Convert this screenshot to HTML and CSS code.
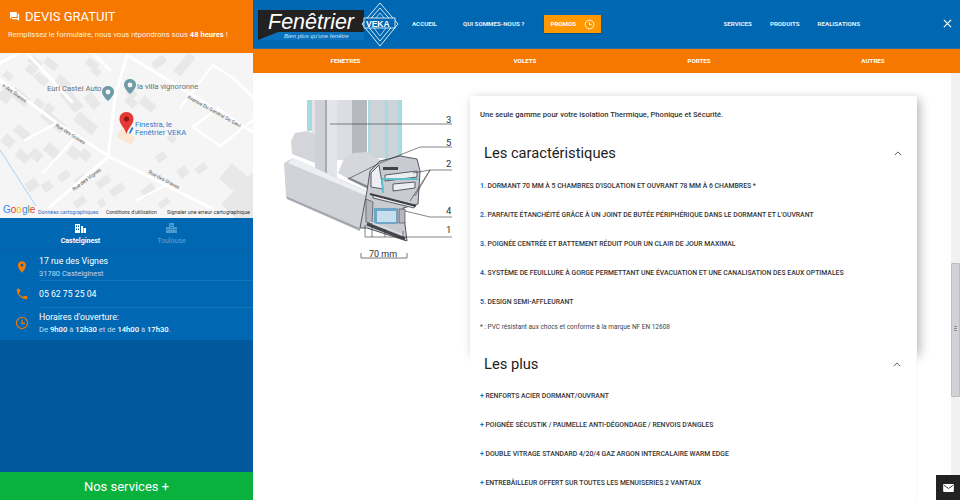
FILE: index.html
```html
<!DOCTYPE html>
<html lang="fr">
<head>
<meta charset="utf-8">
<title>Fenêtrier VEKA</title>
<link rel="stylesheet" href="styles.css">
</head>
<body>
<div class="page">
  <aside class="side">
    <div class="quote">
      <h2 class="quote-title">
        <svg class="quote-icon" viewBox="0 0 24 24"><path d="M21 6h-2v9H6v2c0 .55.45 1 1 1h11l4 4V7c0-.55-.45-1-1-1zm-4 6V3c0-.55-.45-1-1-1H3c-.55 0-1 .45-1 1v14l4-4h10c.55 0 1-.45 1-1z"/></svg>
        DEVIS GRATUIT
      </h2>
      <p class="quote-sub">Remplissez le formulaire, nous vous répondrons sous <b>48 heures</b> !</p>
    </div>
    <svg class="map" viewBox="0 53 253 165" width="253" height="165">
      <rect x="0" y="53" width="253" height="165" fill="#f5f5f5"/>
      <g fill="#e8e8e8">
        <rect x="28" y="58" width="14" height="8" transform="rotate(40 35 62)"/>
        <rect x="44" y="60" width="14" height="8" transform="rotate(40 51 64)"/>
        <rect x="26" y="66" width="10" height="8" transform="rotate(40 31 70)"/>
        <rect x="4" y="72" width="9" height="7" transform="rotate(40 8 75)"/>
        <rect x="0" y="88" width="12" height="14" transform="rotate(40 6 95)"/>
        <rect x="10" y="92" width="20" height="10" transform="rotate(40 20 97)"/>
        <rect x="34" y="75" width="14" height="8" transform="rotate(40 41 79)"/>
        <rect x="56" y="78" width="14" height="9" transform="rotate(40 63 82)"/>
        <rect x="86" y="60" width="12" height="8" transform="rotate(40 92 64)"/>
        <rect x="92" y="68" width="9" height="7" transform="rotate(40 96 71)"/>
        <rect x="34" y="100" width="10" height="9" transform="rotate(40 39 104)"/>
        <rect x="45" y="104" width="9" height="9" transform="rotate(40 49 108)"/>
        <rect x="60" y="95" width="24" height="11" transform="rotate(50 72 100)"/>
        <rect x="84" y="96" width="16" height="10" transform="rotate(50 92 101)"/>
        <rect x="40" y="116" width="26" height="10" transform="rotate(40 53 121)"/>
        <rect x="74" y="118" width="24" height="11" transform="rotate(40 86 123)"/>
        <rect x="2" y="136" width="12" height="10" transform="rotate(40 8 141)"/>
        <rect x="14" y="128" width="16" height="9" transform="rotate(40 22 132)"/>
        <rect x="16" y="152" width="14" height="9" transform="rotate(40 23 156)"/>
        <rect x="30" y="150" width="12" height="10" transform="rotate(40 36 155)"/>
        <rect x="44" y="146" width="16" height="10" transform="rotate(40 52 151)"/>
        <rect x="68" y="148" width="12" height="10" transform="rotate(40 74 153)"/>
        <rect x="80" y="150" width="10" height="10" transform="rotate(40 85 155)"/>
        <rect x="26" y="180" width="12" height="10" transform="rotate(-35 32 185)"/>
        <rect x="42" y="182" width="10" height="9" transform="rotate(-35 47 186)"/>
        <rect x="58" y="172" width="12" height="8" transform="rotate(-35 64 176)"/>
        <rect x="75" y="176" width="12" height="8" transform="rotate(-35 81 180)"/>
        <rect x="96" y="178" width="15" height="8" transform="rotate(-35 103 182)"/>
        <rect x="110" y="186" width="15" height="8" transform="rotate(-35 117 190)"/>
        <rect x="74" y="198" width="12" height="8" transform="rotate(-35 80 202)"/>
        <rect x="98" y="200" width="7" height="7" transform="rotate(-35 101 203)"/>
        <rect x="141" y="186" width="14" height="9" transform="rotate(-35 148 190)"/>
        <rect x="158" y="200" width="12" height="6" transform="rotate(-35 164 203)"/>
        <rect x="156" y="153" width="10" height="8" transform="rotate(-35 161 157)"/>
        <rect x="178" y="167" width="10" height="10" transform="rotate(-35 183 172)"/>
        <rect x="195" y="165" width="12" height="7" transform="rotate(-35 201 168)"/>
        <rect x="222" y="170" width="28" height="20" transform="rotate(40 236 180)"/>
        <path d="M253 172v46h-18l-14-14z"/>
        <rect x="140" y="100" width="16" height="9" transform="rotate(40 148 104)"/>
        <rect x="125" y="98" width="12" height="8" transform="rotate(40 131 102)"/>
        <rect x="168" y="135" width="8" height="7" transform="rotate(40 172 138)"/>
        <rect x="172" y="60" width="24" height="9" transform="rotate(-50 184 64)"/>
        <rect x="152" y="58" width="14" height="8" transform="rotate(-35 159 62)"/>
        <rect x="127" y="90" width="10" height="7" transform="rotate(40 132 93)"/>
      </g>
      <g fill="none" stroke="#fff" stroke-linecap="round" stroke-linejoin="round">
        <path d="M0 80 L57 123 L110 157 L213 209" stroke-width="3"/>
        <path d="M127 55 L115 97 L108 157 L50 207" stroke-width="3"/>
        <path d="M127 55 L253 132" stroke-width="3"/>
        <path d="M0 63 L20 53 M27 53 L72 102 M93 53 L110 70" stroke-width="3"/>
        <path d="M43 173 L73 140 M25 140 L57 123 M137 200 L170 183" stroke-width="2.500"/>
        <path d="M180 108 L213 65 L233 78 L253 97 M193 127 L220 146 L253 120 M193 127 L218 108 L240 125" stroke-width="2.500"/>
      </g>
      <path d="M0 150 L36 206" stroke="#a6d4f5" stroke-width="1"/>
      <path d="M122 129 L135 138 L131 144 L117 136z" fill="#fbe8d2" stroke="#f6d9b4" stroke-width=".5"/>
      <path d="M108 86c-3.500 0-6 2.500-6 6 0 4 6 9 6 9s6-5 6-9c0-3.500-2.500-6-6-6z" fill="#6f9ba8"/>
      <circle cx="108" cy="92" r="2.400" fill="#f5f5f5"/>
      <path d="M130 79c-3.500 0-6 2.500-6 6 0 4 6 9 6 9s6-5 6-9c0-3.500-2.500-6-6-6z" fill="#6f9ba8"/>
      <circle cx="130" cy="85" r="2.400" fill="#f5f5f5"/>
      <path d="M126.500 112c-4.200 0-7 3.100-7 7 0 5.500 5.200 8.500 7 15 1.800-6.500 7-9.500 7-15 0-3.900-2.800-7-7-7z" fill="#e53935"/>
      <circle cx="126.500" cy="119" r="2.500" fill="#8a1a14"/>
      <path d="M129 133c1-2 1.500-4 3-6l1.500 1c-1 2-2 4-3.500 6z" fill="#2f7fd9"/>
      <g font-family="Roboto, sans-serif" font-size="7.700" fill="#5f7177">
        <text x="47" y="91">Eurl Castel Auto</text>
        <text x="137" y="89">la villa vignoronne</text>
      </g>
      <g font-family="Roboto, sans-serif" font-size="7.700" fill="#2f79c9">
        <text x="135" y="127">Finestra, le</text>
        <text x="135" y="135">Fenêtrier VEKA</text>
      </g>
      <g font-family="Roboto, sans-serif" font-size="5" fill="#555">
        <text x="2" y="86" transform="rotate(36 2 86)">e des Graves</text>
        <text x="55" y="126" transform="rotate(33 55 126)">Rue des Graves</text>
        <text x="148" y="173" transform="rotate(28 148 173)">Rue des Graves</text>
        <text x="74" y="191" transform="rotate(-37 74 191)">Rue des Vignes</text>
        <text x="187" y="98" transform="rotate(29 187 98)">Avenue Du Général De Gaul</text>
      </g>
      <text x="3" y="213" class="g-logo"><tspan fill="#4285f4">G</tspan><tspan fill="#ea4335">o</tspan><tspan fill="#fbbc05">o</tspan><tspan fill="#4285f4">g</tspan><tspan fill="#34a853">l</tspan><tspan fill="#ea4335">e</tspan></text>
      <g font-family="Roboto, sans-serif" font-size="5" fill="#333">
        <text x="38" y="214" font-size="5.300" fill="#3a6fc4">Données cartographiques</text>
        <text x="106" y="214">Conditions d'utilisation</text>
        <text x="167" y="214" font-size="5.400">Signaler une erreur cartographique</text>
      </g>
    </svg>
    <nav class="tabs">
      <div class="tab tab-on">
        <svg class="tab-icon" viewBox="0 0 11 10"><path d="M0 1h5v9H0zM6 3h2v7H6zM8.500 5H11v5H8.500z"/><path d="M1 2.500h1v1.500H1zM3 2.500h1v1.500H3zM1 5.500h1V7H1zM3 5.500h1V7H3z" fill="#0068b3"/></svg>
        <span>Castelginest</span>
      </div>
      <div class="tab tab-off">
        <svg class="tab-icon" viewBox="0 0 11 10"><path d="M0 4h3v6H0zM3 0h5v10H3zM8 4h3v6H8z"/><path d="M4 2h3v.6H4zM4 4h3v.6H4zM4 6h3v.6H4zM0 6h3v.6H0zM8 6h3v.6H8z" fill="#0068b3"/></svg>
        <span>Toulouse</span>
      </div>
    </nav>
    <div class="infos">
      <div class="info info-addr">
        <svg class="info-icon" viewBox="0 0 24 24"><path d="M12 2C8.100 2 5 5.100 5 9c0 5.200 7 13 7 13s7-7.800 7-13c0-3.900-3.100-7-7-7zm0 9.500a2.500 2.500 0 1 1 0-5 2.500 2.500 0 0 1 0 5z"/></svg>
        <div class="info-body"><div class="info-main">17 rue des Vignes</div><div class="info-sub">31780 Castelginest</div></div>
      </div>
      <div class="info info-tel">
        <svg class="info-icon" viewBox="0 0 24 24"><path d="M6.600 10.800c1.400 2.800 3.800 5.100 6.600 6.600l2.200-2.200c.3-.3.700-.4 1-.2 1.100.4 2.300.6 3.600.6.600 0 1 .4 1 1V20c0 .6-.4 1-1 1C10.600 21 3 13.400 3 4c0-.6.400-1 1-1h3.500c.6 0 1 .4 1 1 0 1.300.2 2.500.6 3.600.1.300 0 .7-.2 1z"/></svg>
        <div class="info-body"><div class="info-main">05 62 75 25 04</div></div>
      </div>
      <div class="info info-time">
        <svg class="info-icon info-clock" viewBox="0 0 24 24"><circle cx="12" cy="12" r="9.500"/><path d="M12 6.500V12.500H17"/></svg>
        <div class="info-body"><div class="info-main">Horaires d'ouverture:</div><div class="info-hours">De <b>9h00</b> à <b>12h30</b> et de <b>14h00</b> à <b>17h30</b>.</div></div>
      </div>
    </div>
    <div class="side-fill"></div>
    <button class="services">Nos services +</button>
  </aside>
  <div class="main">
    <header class="top">
      <div class="logo">
        <svg class="logo-svg" viewBox="0 0 142 48" width="142" height="48">
          <path d="M0 30L18 30H106V40H0z" fill="#0a71bd"/>
          <path d="M0 10H106V32H20L0 40z" fill="#222"/>
          <path d="M122 3 L140 24 L122 46 L104 24z" fill="#0068b3" stroke="#d8e8f5" stroke-width="1"/>
          <path d="M122 8 L136 24 L122 41 L108 24z" fill="none" stroke="#d8e8f5" stroke-width="1"/>
          <path d="M122 13 L131 24 L122 36 L113 24z" fill="none" stroke="#d8e8f5" stroke-width=".8"/>
          <rect x="106" y="18" width="31" height="10" fill="#0068b3" stroke="#fff" stroke-width=".8"/>
          <text x="10" y="29" class="logo-name">Fenêtrier</text>
          <text x="108" y="26.500" class="logo-veka">VEKA</text>
          <text x="26" y="38" class="logo-tag">Bien plus qu'une fenêtre</text>
        </svg>
      </div>
      <nav class="nav nav-left">
        <a>ACCUEIL</a>
        <a>QUI SOMMES-NOUS ?</a>
        <span class="promo">PROMOS
          <svg class="promo-icon" viewBox="0 0 24 24"><circle cx="12" cy="12" r="9.500"/><path d="M12 6.500V12.500H17"/></svg>
        </span>
      </nav>
      <nav class="nav nav-right">
        <a>SERVICES</a>
        <a>PRODUITS</a>
        <a>REALISATIONS</a>
      </nav>
      <svg class="close" viewBox="0 0 10 10"><path d="M1 1L9 9M9 1L1 9"/></svg>
    </header>
    <nav class="cats">
      <a>FENETRES</a><a>VOLETS</a><a>PORTES</a><a>AUTRES</a>
    </nav>
    <div class="content">
      <div class="scroll-area">
        <figure class="figure">
          <svg viewBox="0 0 200 180" width="200" height="180">
            <path d="M37 9h5v31h-5zM128 9h4v62h-4zM98 9h2v62h-2zM115 9h3v62h-3z" fill="#a8dbe0"/>
            <path d="M42 9h3v34h-3z" fill="#e3e5e9"/>
            <path d="M45 9h10v72H45z" fill="#cfd1d8"/>
            <path d="M55 9h2v74h-2z" fill="#a9acb5"/>
            <path d="M57 9h10v78H57z" fill="#e4e5ea"/>
            <path d="M67 9h15v60H67z" fill="#dcdde2"/>
            <path d="M82 9h15v55H82z" fill="#b7b9c1"/>
            <path d="M100 9h15v58h-15zM118 9h10v58h-10z" fill="#ccd4d9"/>
            <path d="M21 50L25 42 37 40 45 43V72L22 63z" fill="#d3d5db"/>
            <path d="M68 82L74 68 84 62 97 61 112 70 100 100z" fill="#d6d7dd"/>
            <path d="M14 72L23 67 97 100 90 137 16 105z" fill="#d2d3da"/>
            <path d="M23 67L100 102 97 105 18 72z" fill="#eeeff2"/>
            <path d="M78 87L100 97" stroke="#83858c" stroke-width="2"/>
            <path d="M16 105L90 137V140L17 108z" fill="#a6a8b0"/>
            <path d="M97 100L100 80 110 70 130 65 147 68 150 80 148 113 133 117 137 150 97 137 90 137z" fill="#c9cbd2" stroke="#55585f" stroke-width="1"/>
            <path d="M101 82l8-8 4 24-12-2zM115 84l32-4v6l-32 4zM123 93l22-2v6l-22 3zM103 104l42 10-1 3-41-10z" fill="#eceef1" stroke="#4c4e54" stroke-width=".9"/>
            <path d="M112 88h36" stroke="#5fbecb" stroke-width="1.800"/>
            <path d="M112 88l1 14" stroke="#5fbecb" stroke-width="1.800"/>
            <path d="M113 76h15v3h-15z" fill="#3f4248"/>
            <path d="M100 103l46 12" stroke="#3d3f45" stroke-width="2.200"/>
            <path d="M96 108l7 3 -1 22-6-2z" fill="#b5b7bf" stroke="#4c4e54" stroke-width=".7"/>
            <rect x="104" y="117" width="24" height="16" fill="#6fa6c6"/>
            <rect x="107" y="120" width="19" height="11" fill="#c7dfec"/>
            <path d="M129 118h6v14h-6z" fill="#b5b7bf" stroke="#4c4e54" stroke-width=".7"/>
            <path d="M97 133L135 148" stroke="#44464c" stroke-width="3"/>
            <path d="M100 131L134 144" stroke="#e8e9ed" stroke-width="1"/>
            <g stroke="#333" stroke-width=".6" fill="none">
              <path d="M60 33H182M80 87L110 72 150 56H182M143 82L160 79H182M160 79L145 105M160 79L140 110M135 120L160 126H182M95 146H182M95 134V146M102 136V146M115 138V146M133 140V146"/>
            </g>
            <g class="fig-num">
              <text x="176" y="32">3</text>
              <text x="176" y="55">5</text>
              <text x="176" y="76">2</text>
              <text x="176" y="123">4</text>
              <text x="176" y="142">1</text>
            </g>
            <path d="M91 162v5H137v-5" stroke="#555" fill="none" stroke-width=".8"/>
            <text x="99" y="166" class="fig-mm">70 mm</text>
          </svg>
        </figure>
        <article class="card">
          <section class="card-raised">
            <p class="lead">Une seule gamme pour votre isolation Thermique, Phonique et Sécurité.</p>
            <div class="sec-head"><h3>Les caractéristiques</h3><svg class="chev" viewBox="0 0 10 6"><path d="M1 5l4-4 4 4"/></svg></div>
            <ul class="list">
              <li><em>1.</em> DORMANT 70 MM À 5 CHAMBRES D'ISOLATION ET OUVRANT 78 MM À 6 CHAMBRES *</li>
              <li><em>2.</em> PARFAITE ÉTANCHÉITÉ GRÂCE À UN JOINT DE BUTÉE PÉRIPHÉRIQUE DANS LE DORMANT ET L'OUVRANT</li>
              <li><em>3.</em> POIGNÉE CENTRÉE ET BATTEMENT RÉDUIT POUR UN CLAIR DE JOUR MAXIMAL</li>
              <li><em>4.</em> SYSTÈME DE FEUILLURE À GORGE PERMETTANT UNE ÉVACUATION ET UNE CANALISATION DES EAUX OPTIMALES</li>
              <li><em>5.</em> DESIGN SEMI-AFFLEURANT</li>
            </ul>
            <p class="note">* : PVC résistant aux chocs et conforme à la marque NF EN 12608</p>
          </section>
          <section class="card-flat">
            <div class="sec-head sec-head-2"><h3>Les plus</h3><svg class="chev" viewBox="0 0 10 6"><path d="M1 5l4-4 4 4"/></svg></div>
            <ul class="list">
              <li><em>+</em> RENFORTS ACIER DORMANT/OUVRANT</li>
              <li><em>+</em> POIGNÉE SÉCUSTIK / PAUMELLE ANTI-DÉGONDAGE / RENVOIS D'ANGLES</li>
              <li><em>+</em> DOUBLE VITRAGE STANDARD 4/20/4 GAZ ARGON INTERCALAIRE WARM EDGE</li>
              <li><em>+</em> ENTREBÂILLEUR OFFERT SUR TOUTES LES MENUISERIES 2 VANTAUX</li>
            </ul>
          </section>
        </article>
        <div class="scrollbar"><div class="thumb"></div></div>
      </div>
      <div class="mail"><svg viewBox="0 0 12 9"><rect width="12" height="9" rx="1" fill="#fff"/><path d="M1 1.500l5 3.500 5-3.500" fill="none" stroke="#222"/></svg></div>
    </div>
  </div>
</div>
</body>
</html>
```
FILE: styles.css
```css
* { box-sizing: border-box; }
html, body { margin: 0; padding: 0; height: 500px; overflow: hidden; background: #fff; }
body { font-family: Roboto, "Liberation Sans", sans-serif; }
.page { display: flex; width: 960px; height: 500px; }
.side { width: 253px; flex: none; display: flex; flex-direction: column; background: #01589c; color: #fff; }
.quote { height: 53px; background: #f77800; padding: 8px 8px 0 9px; }
.quote-title { margin: 0; display: flex; align-items: center; gap: 5px; font-size: 13px; font-weight: 400; line-height: 17px; }
.quote-icon { width: 11px; height: 11px; fill: #fff; }
.quote-sub { margin: 4px 0 0 -1px; font-size: 7.600px; line-height: 12px; white-space: nowrap; color: #fdf0e2; }
.quote-sub b { font-weight: 700; color: #fff; }
.map { display: block; flex: none; }
.g-logo { font-family: "Liberation Sans", sans-serif; font-size: 10px; }
.tabs { height: 30px; display: flex; background: #0068b3; padding: 5px 0 0 35px; }
.tab { width: 91px; display: flex; flex-direction: column; align-items: center; font-size: 7px; line-height: 10px; }
.tab-on { font-weight: 700; }
.tab-off { color: #4b9ad0; font-weight: 500; }
.tab-icon { width: 11px; height: 10px; fill: currentColor; margin-bottom: 3px; }
.infos { background: #0068b3; border-top: 1px solid #0561a9; }
.info { display: flex; }
.info-addr { height: 32px; padding-top: 6px; }
.info-tel { height: 27px; padding-top: 7px; }
.info-time { height: 32px; padding-top: 3px; }
.info-icon { width: 14px; height: 14px; fill: #f77800; margin: 4px 10px 0 15px; flex: none; }
.info-addr .info-icon { margin-top: 5px; }
.info-tel .info-icon { margin-top: -1px; }
.info-time .info-icon { margin-top: 5px; }
.info-clock { fill: none; stroke: #f77800; stroke-width: 2; }
.info-body { flex: 1; }
.info-addr, .info-tel { position: relative; }
.info-addr::after, .info-tel::after { content: ""; position: absolute; left: 39px; right: 0; bottom: 0; height: 1px; background: #1274b9; }
.info-main { font-size: 8.700px; line-height: 13px; }
.info-sub { font-size: 7.500px; line-height: 12px; color: #bcd8ee; }
.info-hours { font-size: 7.650px; line-height: 12px; color: #bcd8ee; }
.info-hours b { color: #fff; font-weight: 500; }
.side-fill { flex: 1; background: #01589c; }
.services { height: 28px; border: 0; background: #08b23c; color: #fff; font: 400 13px Roboto, sans-serif; padding: 0; }
.main { flex: 1; display: flex; flex-direction: column; min-width: 0; }
.top { height: 49px; flex: none; background: #0068b3; display: flex; align-items: center; color: #fff; border-bottom: 1px solid #2b6e9f; position: relative; }
.logo { width: 148px; flex: none; height: 48px; padding-left: 5px; }
.logo-svg { display: block; overflow: visible; }
.logo-name { font-family: "Liberation Sans", sans-serif; font-style: italic; font-size: 21.500px; fill: #fff; }
.logo-veka { font-family: "Liberation Sans", sans-serif; font-weight: 700; font-size: 8.500px; fill: #fff; }
.logo-tag { font-family: "Liberation Sans", sans-serif; font-style: italic; font-size: 6px; fill: #cfe4f5; }
.nav { display: flex; align-items: center; font-size: 6.200px; font-weight: 700; color: #e3eff8; }
.nav-left { margin-left: 11px; }
.nav-left a:first-child { margin-right: 26px; }
.nav-left a + a { margin-right: 20px; }
.nav-right { margin-left: auto; margin-right: 100px; gap: 18px; }
.promo { width: 57px; height: 18px; background: #ff9800; color: #fff; display: flex; align-items: center; justify-content: space-between; padding: 0 6px 0 6px; box-shadow: 0 1px 1px rgba(0,0,0,.2); }
.promo-icon { width: 11px; height: 11px; fill: none; stroke: #fff; stroke-width: 2; }
.close { width: 9px; height: 9px; position: absolute; right: 8px; top: 19px; stroke: #fff; stroke-width: 1.400; fill: none; }
.cats { height: 24px; flex: none; background: #f77800; display: grid; grid-template-columns: 185px 174px 174px 174px; align-items: center; color: #fff; font-size: 6.200px; font-weight: 700; text-align: center; }
.content { flex: 1; position: relative; min-height: 0; overflow: hidden; }
.scroll-area { display: flex; height: 100%; }
.figure { margin: 0; width: 217px; flex: none; padding: 18px 0 0 17px; }
.fig-num text { font-family: Roboto, sans-serif; font-size: 9.500px; fill: #333; }
.fig-mm { font-family: Roboto, sans-serif; font-size: 9px; fill: #333; }
.card { width: 447px; flex: none; margin-top: 23px; }
.card-raised { height: 257px; padding: 12px 10px 0; background: #fff; box-shadow: 3px 3px 10px rgba(0,0,0,.28); position: relative; }
.card-flat { padding: 0 10px; background: #fff; position: relative; border-right: 1px solid #f7f7f7; }
.lead { margin: 0; font-size: 7.600px; line-height: 14px; font-weight: 500; color: #333; }
.sec-head { display: flex; align-items: center; justify-content: space-between; margin-top: 21px; height: 20px; padding: 0 5px 0 4px; }
.sec-head-2 { margin-top: 0; height: 22px; }
.sec-head h3 { margin: 0; font-size: 14.700px; font-weight: 400; color: #222; }
.chev { width: 8px; height: 5px; stroke: #555; stroke-width: 1.200; fill: none; }
.list { list-style: none; margin: 18px 0 0; padding: 0; font-size: 6.850px; font-weight: 500; color: #333; }
.card-flat .list { margin-top: 16px; }
.list li { height: 29px; line-height: 10px; white-space: nowrap; }
.list em { font-style: normal; font-weight: 700; color: #0073c6; }
.note { margin: -4px 0 0; font-size: 6.500px; line-height: 10px; color: #444; }
.scrollbar { width: 9px; margin-left: auto; background: #f1f1f1; height: 100%; padding-top: 190px; }
.thumb { height: 134px; background: #d2d2d6; border: 1px solid #bdbdbd; border-radius: 1px; position: relative; }
.thumb::after { content: ""; position: absolute; left: 2px; right: 2px; top: 62px; height: 5px; background: repeating-linear-gradient(#8d8d8d 0 1px, transparent 1px 2px); }
.mail { position: absolute; right: 0; bottom: 0; width: 24px; height: 25px; background: #222; display: flex; align-items: center; justify-content: center; }
.mail svg { width: 11px; height: 8px; }
```
